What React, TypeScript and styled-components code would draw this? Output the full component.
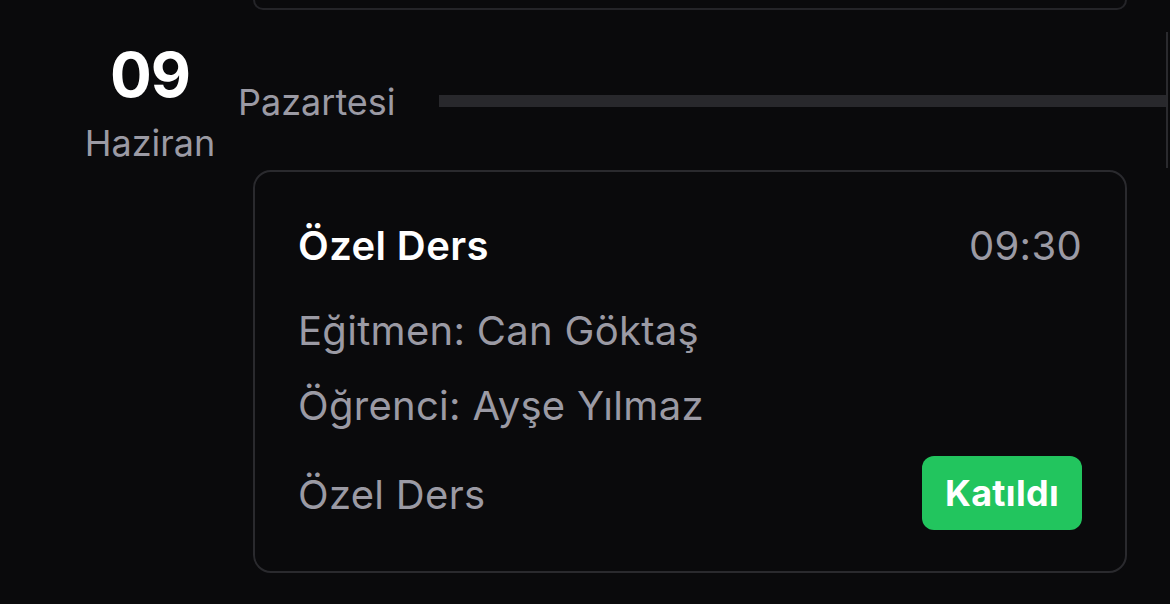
import React from "react";
import styled, { createGlobalStyle } from "styled-components";

const Global = createGlobalStyle`
  html, body { margin: 0; padding: 0; background: #0a0a0c; }
  body { font-family: Inter, "Noto Sans", sans-serif; -webkit-font-smoothing: antialiased; }
  #root { width: 1170px; height: 604px; overflow: hidden; }
`;

const Page = styled.div`
  width: 1170px;
  height: 604px;
  background: #0a0a0c;
  display: flex;
  flex-direction: column;
  overflow: hidden;
`;

const PrevCardEnd = styled.div`
  margin-left: 253px;
  width: 874px;
  height: 10px;
  box-sizing: border-box;
  border: 2px solid #242428;
  border-top: none;
  border-radius: 0 0 18px 18px;
`;

const DayHeader = styled.div`
  margin-top: 22px;
  width: 1168px;
  height: 136px;
  box-sizing: border-box;
  border-right: 2px solid #2a2a2e;
  display: flex;
  align-items: flex-start;
  padding-left: 86px;
`;

const DateCol = styled.div`
  width: 128px;
  margin-top: 5px;
  display: flex;
  flex-direction: column;
  align-items: center;
`;

const DayNum = styled.div`
  font-size: 62px;
  font-weight: 700;
  color: #ffffff;
  line-height: 76px;
  letter-spacing: -1px;
`;

const Month = styled.div`
  margin-top: 8px;
  font-size: 36px;
  color: #9b9aa4;
  line-height: 44px;
`;

const WeekDay = styled.div`
  margin-left: 24px;
  margin-top: 50px;
  font-size: 36px;
  color: #9b9aa4;
  line-height: 40px;
`;

const Rule = styled.div`
  flex: 1;
  margin-left: 43px;
  margin-top: 63px;
  height: 12px;
  background: #28282c;
`;

const Card = styled.div`
  margin-top: 2px;
  margin-left: 253px;
  width: 874px;
  height: 403px;
  box-sizing: border-box;
  border: 2px solid #2a2a2e;
  border-radius: 18px;
  padding: 52px 43px 0 43px;
  display: flex;
  flex-direction: column;
`;

const Row = styled.div<{ $mt?: number }>`
  display: flex;
  align-items: center;
  justify-content: space-between;
  margin-top: ${(p) => p.$mt ?? 0}px;
`;

const Title = styled.div`
  font-size: 40px;
  font-weight: 600;
  color: #ffffff;
  line-height: 44px;
  letter-spacing: 0.4px;
`;

const Muted = styled.div<{ $shift?: number }>`
  font-size: 40px;
  color: #9b9aa4;
  line-height: 44px;
  letter-spacing: 0.3px;
  padding-top: ${(p) => p.$shift ?? 0}px;
`;

const Badge = styled.div`
  background: #22c55e;
  color: #ffffff;
  font-size: 36px;
  font-weight: 700;
  letter-spacing: 0.3px;
  border-radius: 12px;
  width: 160px;
  height: 74px;
  display: flex;
  align-items: center;
  justify-content: center;
`;

export default function App() {
  return (
    <Page>
      <Global />
      <PrevCardEnd />
      <DayHeader>
        <DateCol>
          <DayNum>09</DayNum>
          <Month>Haziran</Month>
        </DateCol>
        <WeekDay>Pazartesi</WeekDay>
        <Rule />
      </DayHeader>
      <Card>
        <Row>
          <Title>Özel Ders</Title>
          <Muted>09:30</Muted>
        </Row>
        <Row $mt={41}>
          <Muted>Eğitmen: Can Göktaş</Muted>
        </Row>
        <Row $mt={31}>
          <Muted>Öğrenci: Ayşe Yılmaz</Muted>
        </Row>
        <Row $mt={28}>
          <Muted $shift={4}>Özel Ders</Muted>
          <Badge>Katıldı</Badge>
        </Row>
      </Card>
    </Page>
  );
}
